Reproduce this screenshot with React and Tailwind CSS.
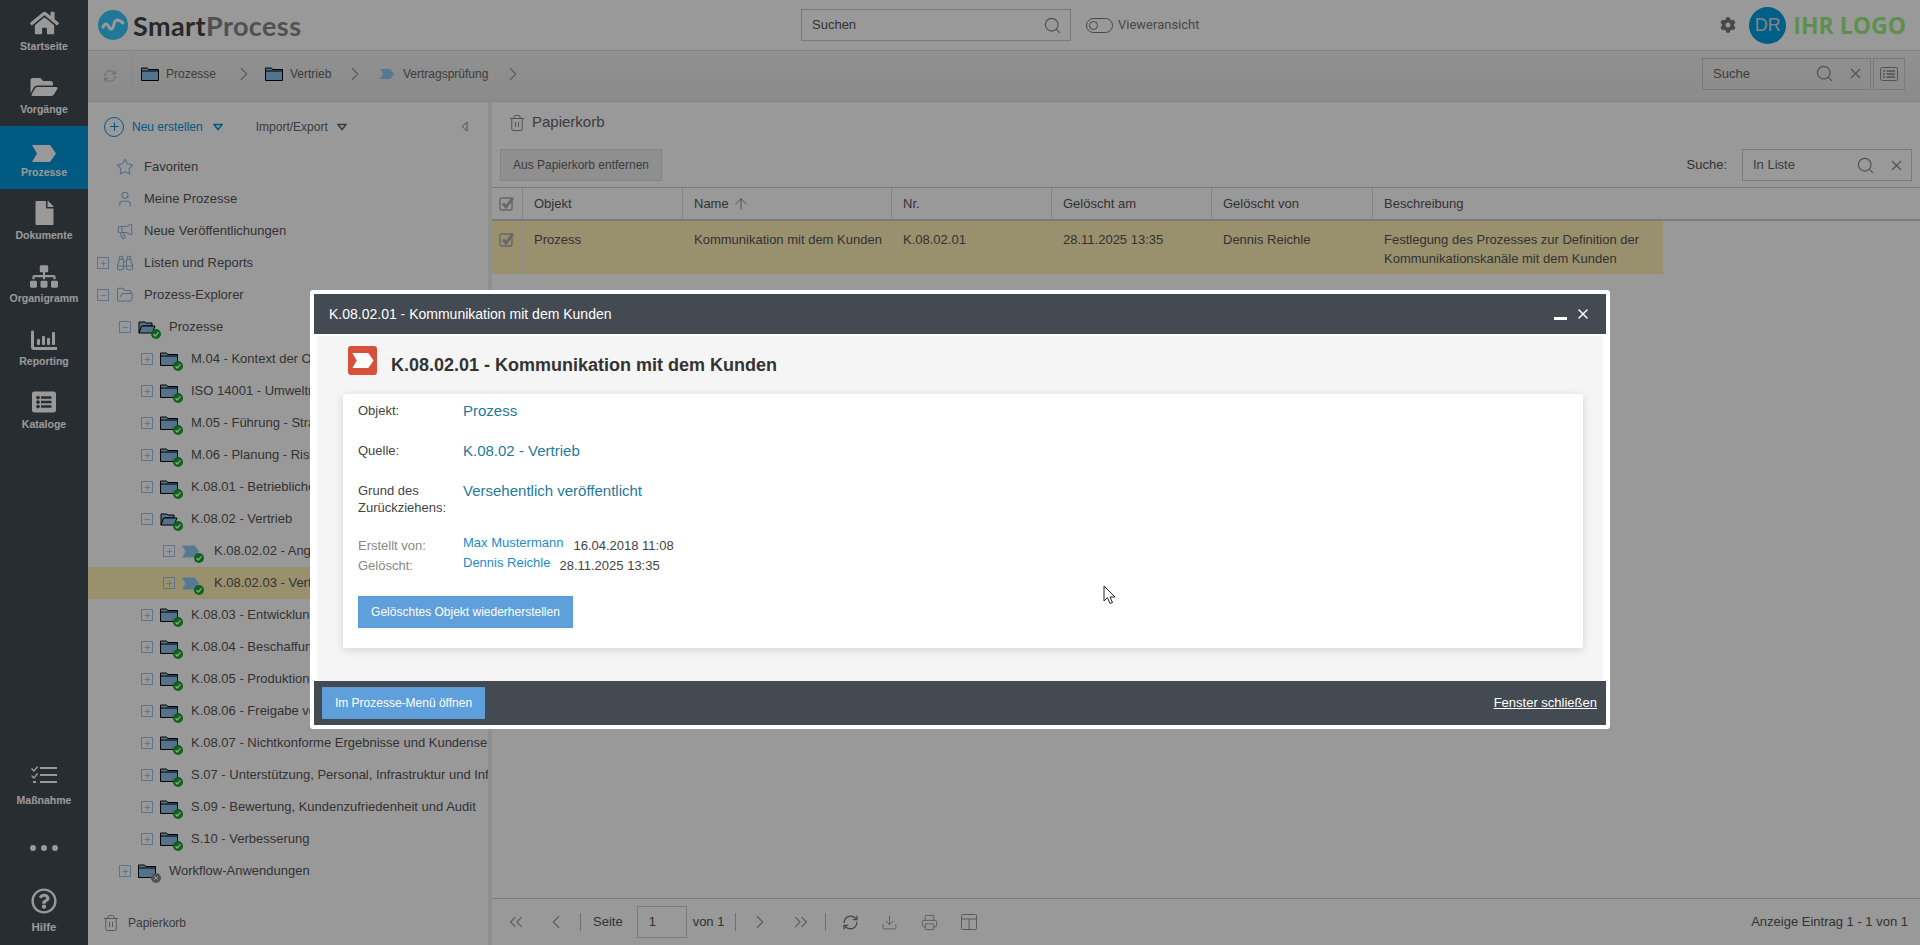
import React from "react";
import {
  Star, User, Megaphone, Binoculars, FolderOpen, Search, X, RefreshCw, ChevronRight, ChevronLeft,
  ChevronsLeft, ChevronsRight, Plus, Minus, Trash2, ArrowUp, Download, Printer,
} from "lucide-react";
import { FaHome, FaFolderOpen, FaFile, FaSitemap, FaListAlt, FaCog, FaRegQuestionCircle } from "react-icons/fa";

const Chevron = ({ className }) => (
  <svg viewBox="0 0 24 17" className={className} fill="currentColor">
    <path d="M0 0h18l6 8.5-6 8.5H0l5-8.5z" />
  </svg>
);

const Folder = ({ open }) => (
  <svg viewBox="0 0 18 14" className="h-[14px] w-[18px]">
    <path d={open ? "M1 13V2h6l1 1h6v3H4z" : "M.5 13.5V1h6l1 1.5h10v11z"} fill="#8bc0ec" stroke="#000" strokeWidth="1" />
    <path d={open ? "M1 13 3.500 6H17l-3 7z" : "M.5 4h17"} fill="#8bc0ec" stroke="#000" strokeWidth="1" />
  </svg>
);

const Badge = ({ off }) => (
  <span className={`absolute -right-[5px] -bottom-[5px] flex h-[10px] w-[10px] items-center justify-center rounded-full ${off ? "bg-[#888]" : "bg-[#10a82a]"}`}>
    {off ? (
      <X className="h-[6px] w-[6px] text-white" strokeWidth={4} />
    ) : (
      <svg viewBox="0 0 10 10" className="h-[10px] w-[10px]"><path d="M2.500 5.200 4.300 7l3.200-3.600" fill="none" stroke="#fff" strokeWidth="1.400" /></svg>
    )}
  </span>
);

const Toggle = ({ open }) => (
  <span className="flex h-[12px] w-[12px] shrink-0 items-center justify-center border border-[#9fc3e8] text-[#7ba6d4]">
    {open ? <Minus className="h-[9px] w-[9px]" strokeWidth={1.500} /> : <Plus className="h-[9px] w-[9px]" strokeWidth={1.500} />}
  </span>
);

const navTop = [
  { label: "Startseite", icon: <FaHome className="h-[26px] w-[29px]" /> },
  { label: "Vorgänge", icon: <FaFolderOpen className="h-[24px] w-[28px]" /> },
  { label: "Prozesse", icon: <Chevron className="h-[17px] w-[24px]" />, active: true },
  { label: "Dokumente", icon: <FaFile className="h-[24px] w-[19px]" /> },
  { label: "Organigramm", icon: <FaSitemap className="h-[23px] w-[28px]" /> },
  {
    label: "Reporting",
    icon: (
      <svg viewBox="0 0 26 22" className="h-[22px] w-[26px]" fill="currentColor">
        <path d="M0 3c0-2 3-2 3 0v15h23v3H3c-2 0-3-1-3-3z" />
        <rect x="6" y="10" width="3" height="6" rx="1" />
        <rect x="11" y="7" width="3" height="9" rx="1" />
        <rect x="16" y="9" width="3" height="7" rx="1" />
        <rect x="21" y="3" width="3" height="13" rx="1" />
      </svg>
    ),
  },
  { label: "Kataloge", icon: <FaListAlt className="h-[24px] w-[28px]" /> },
];

const tree = [
  { label: "Favoriten", icon: Star },
  { label: "Meine Prozesse", icon: User },
  { label: "Neue Veröffentlichungen", icon: Megaphone },
  { label: "Listen und Reports", icon: Binoculars, toggle: "plus", level: 1 },
  { label: "Prozess-Explorer", icon: FolderOpen, toggle: "minus", level: 1 },
  { label: "Prozesse", kind: "folder", open: true, level: 2 },
  { label: "M.04 - Kontext der Organisation", kind: "folder", level: 3 },
  { label: "ISO 14001 - Umweltmanagement", kind: "folder", level: 3 },
  { label: "M.05 - Führung - Strategie", kind: "folder", level: 3 },
  { label: "M.06 - Planung - Risiken", kind: "folder", level: 3 },
  { label: "K.08.01 - Betriebliche Planung", kind: "folder", level: 3 },
  { label: "K.08.02 - Vertrieb", kind: "folder", open: true, level: 3 },
  { label: "K.08.02.02 - Angebotserstellung", kind: "process", level: 4 },
  { label: "K.08.02.03 - Vertragsprüfung", kind: "process", level: 4, selected: true },
  { label: "K.08.03 - Entwicklung", kind: "folder", level: 3 },
  { label: "K.08.04 - Beschaffung", kind: "folder", level: 3 },
  { label: "K.08.05 - Produktion", kind: "folder", level: 3 },
  { label: "K.08.06 - Freigabe von Produkten", kind: "folder", level: 3 },
  { label: "K.08.07 - Nichtkonforme Ergebnisse und Kundenservice", kind: "folder", level: 3 },
  { label: "S.07 - Unterstützung, Personal, Infrastruktur und Information", kind: "folder", level: 3 },
  { label: "S.09 - Bewertung, Kundenzufriedenheit und Audit", kind: "folder", level: 3 },
  { label: "S.10 - Verbesserung", kind: "folder", level: 3 },
  { label: "Workflow-Anwendungen", kind: "folder", level: 2, off: true },
];

const TreeRow = ({ row }) => {
  const Icon = row.icon;
  const pad = { 0: "pl-[28px]", 1: "pl-[9px]", 2: "pl-[31px]", 3: "pl-[53px]", 4: "pl-[75px]" }[row.level || 0];
  const hasToggle = row.toggle || row.kind;
  return (
    <div className={`flex h-8 items-center overflow-hidden whitespace-nowrap ${pad} ${row.selected ? "bg-[#fff0b7]" : ""}`}>
      {hasToggle && <span className="mr-[7px]"><Toggle open={row.toggle === "minus" || row.open} /></span>}
      {Icon && <Icon className="mr-[10px] h-[18px] w-[18px] shrink-0 text-[#8fb4dc]" strokeWidth={1.400} />}
      {row.kind === "folder" && (
        <span className="relative mr-[13px] flex shrink-0"><Folder open={row.open} /><Badge off={row.off} /></span>
      )}
      {row.kind === "process" && (
        <span className="relative mr-[15px] flex shrink-0 text-[#8fcbf5]"><Chevron className="h-[13px] w-[17px]" /><Badge /></span>
      )}
      <span className="text-[13px] text-[#555]">{row.label}</span>
    </div>
  );
};

const Caret = ({ className }) => (
  <svg viewBox="0 0 10 8" className={`h-[8px] w-[10px] ${className}`} fill="none" stroke="currentColor" strokeWidth="1.500">
    <path d="M1 1.500h8L5 6.500z" />
  </svg>
);

const CheckBox = () => (
  <svg viewBox="0 0 16 16" className="h-4 w-4 text-[#aaa]" fill="none">
    <rect x="1" y="2" width="12" height="12" rx="1.500" stroke="currentColor" strokeWidth="1.400" />
    <path d="M4 7.500 7 11l7-9" stroke="currentColor" strokeWidth="2.800" />
  </svg>
);

const Crumb = ({ process, label, width }) => (
  <div className={`flex items-center ${width}`}>
    {process ? (
      <Chevron className="mr-[9px] h-[12px] w-[14px] text-[#8fcbf5]" />
    ) : (
      <span className="mr-[7px] flex"><Folder /></span>
    )}
    <span className="text-xs text-[#666]">{label}</span>
  </div>
);

const SearchBox = ({ label, width, clear }) => (
  <div className={`flex h-8 items-center border border-[#ccc] pl-[10px] pr-[6px] ${width}`}>
    <span className="flex-1 text-[13px] text-[#666]">{label}</span>
    <Search className="h-[19px] w-[19px] text-[#888]" strokeWidth={1.500} />
    {clear && <X className="ml-[13px] h-[17px] w-[17px] text-[#888]" strokeWidth={1.500} />}
  </div>
);

const columns = [
  { label: "Objekt", width: "w-[160px]", value: "Prozess" },
  { label: "Name", width: "w-[209px]", value: "Kommunikation mit dem Kunden", sort: true },
  { label: "Nr.", width: "w-[160px]", value: "K.08.02.01" },
  { label: "Gelöscht am", width: "w-[160px]", value: "28.11.2025 13:35" },
  { label: "Gelöscht von", width: "w-[161px]", value: "Dennis Reichle" },
  {
    label: "Beschreibung",
    width: "w-[290px]",
    value: "Festlegung des Prozesses zur Definition der Kommunikationskanäle mit dem Kunden",
    last: true,
  },
];

const Field = ({ label, value, className }) => (
  <div className={`flex ${className}`}>
    <div className="w-[105px] text-[13px] leading-[17px] text-[#444]">{label}</div>
    <div className="text-[15px] leading-[18px] text-[#1f7a9c]">{value}</div>
  </div>
);

export default function App() {
  return (
    <div className="relative flex h-[945px] w-[1920px] overflow-hidden bg-white font-['Liberation_Sans',Arial,sans-serif]">
      {/* Sidebar */}
      <aside className="flex w-[88px] shrink-0 flex-col bg-[#434b54] text-white">
        {navTop.map((item) => (
          <div key={item.label} className={`flex h-[63px] flex-col items-center ${item.active ? "bg-[#0096d9]" : ""}`}>
            <div className="flex h-[40px] items-end justify-center pb-[4px]">{item.icon}</div>
            <span className="text-[10.500px] leading-[13px] font-bold">{item.label}</span>
          </div>
        ))}
        <div className="mt-auto flex flex-col items-center pb-[11px]">
          <svg viewBox="0 0 26 20" className="h-[20px] w-[26px]" fill="currentColor">
            <path d="M1 3l2 2 3-4 1.200 1L3 7 0 4zM1 10l2 2 3-4 1.200 1L3 14l-3-3z" />
            <rect x="9" y="2" width="17" height="2" /><rect x="9" y="9" width="17" height="2" /><rect x="9" y="16" width="17" height="2" /><rect x="2" y="16" width="3" height="2" />
          </svg>
          <span className="mt-[9px] text-[10.500px] leading-[13px] font-bold">Maßnahme</span>
          <div className="mt-[38px] flex gap-[5px]">
            <span className="h-[6px] w-[6px] rounded-full bg-white" />
            <span className="h-[6px] w-[6px] rounded-full bg-white" />
            <span className="h-[6px] w-[6px] rounded-full bg-white" />
          </div>
          <FaRegQuestionCircle className="mt-[37px] h-[26px] w-[26px]" />
          <span className="mt-[7px] text-[11.500px] leading-[13px] font-bold">Hilfe</span>
        </div>
      </aside>

      <div className="flex min-w-0 flex-1 flex-col">
        {/* Top bar */}
        <header className="flex h-[51px] shrink-0 items-center border-b border-[#ddd] pr-[14px] pl-[10px]">
          <svg viewBox="0 0 30 30" className="h-[30px] w-[30px]">
            <circle cx="15" cy="15" r="15" fill="#37c8fa" />
            <path d="M5 17c2-4 4-4 6 0s4 2 5-3 4-5 9-1" fill="none" stroke="#fff" strokeWidth="3" strokeLinecap="round" />
          </svg>
          <span className="ml-[5px] w-[668px] font-['Lato',sans-serif] text-[27px] leading-none font-bold tracking-[0.4px]">
            <span className="text-[#444]">Smart</span><span className="text-[#888]">Process</span>
          </span>
          <div className="flex h-8 w-[270px] items-center border border-[#ccc] pr-[8px] pl-[10px]">
            <span className="flex-1 text-[13px] text-[#555]">Suchen</span>
            <Search className="h-[19px] w-[19px] text-[#888]" strokeWidth={1.500} />
          </div>
          <span className="ml-[15px] flex h-[15px] w-[27px] items-center rounded-full border-[1.500px] border-[#777] pl-[2px]">
            <span className="h-[9px] w-[9px] rounded-full border-[1.500px] border-[#777]" />
          </span>
          <span className="ml-[5px] font-['Roboto',sans-serif] text-[13px] text-[#777]">Vieweransicht</span>
          <FaCog className="ml-auto h-[16px] w-[16px] text-[#777]" />
          <span className="ml-[13px] flex h-[37px] w-[37px] items-center justify-center rounded-full bg-[#009fe0] text-[18px] text-[#ddd]">DR</span>
          <span className="ml-[7px] font-['Open_Sans',sans-serif] text-[23px] leading-none font-bold text-[#9cf082]">IHR LOGO</span>
        </header>

        {/* Breadcrumb bar */}
        <div className="flex h-[51px] shrink-0 items-center border-b border-[#ddd] bg-gradient-to-b from-[#f0f0f0] to-[#e8e8e8] pr-[15px] pb-[5px]">
          <RefreshCw className="mt-[5px] ml-[15px] h-[14px] w-[14px] text-[#aaa]" strokeWidth={1.500} />
          <div className="mr-[9px] ml-[14px] h-[40px] w-px bg-[#e4e4e4]" />
          <Crumb label="Prozesse" width="w-[95px]" />
          <ChevronRight className="mr-[10px] -ml-[3px] h-[22px] w-[22px] text-[#999]" strokeWidth={1.200} />
          <Crumb label="Vertrieb" width="w-[82px]" />
          <ChevronRight className="mr-[14px] -ml-[3px] h-[22px] w-[22px] text-[#999]" strokeWidth={1.200} />
          <Crumb process label="Vertragsprüfung" width="w-[125px]" />
          <ChevronRight className="-ml-[3px] h-[22px] w-[22px] text-[#999]" strokeWidth={1.200} />
          <div className="ml-auto flex items-center gap-[2px]">
            <SearchBox label="Suche" width="w-[169px]" clear />
            <div className="flex h-8 w-[32px] items-center justify-center border border-[#ccc]">
              <svg viewBox="0 0 18 14" className="h-[14px] w-[18px] text-[#888]" fill="none" stroke="currentColor">
                <rect x=".5" y=".5" width="17" height="13" rx="2" />
                <path d="M3 4h2M3 7h2M3 10h2M6.500 4H15M6.500 7H15M6.500 10H15" strokeWidth="1.400" />
              </svg>
            </div>
          </div>
        </div>

        <div className="flex min-h-0 flex-1">
          {/* Left tree panel */}
          <section className="flex w-[404px] shrink-0 border-r-[4px] border-[#eee]">
            <div className="flex w-[400px] flex-col">
              <div className="flex h-[49px] shrink-0 items-center pl-[16px]">
                <span className="flex h-5 w-5 items-center justify-center rounded-full border-[1.500px] border-[#0096d9]">
                  <Plus className="h-[13px] w-[13px] text-[#0096d9]" strokeWidth={2} />
                </span>
                <span className="ml-[8px] text-xs text-[#0096d9]">Neu erstellen</span>
                <Caret className="ml-[10px] text-[#0096d9]" />
                <span className="ml-[33px] text-xs text-[#666]">Import/Export</span>
                <Caret className="ml-[9px] text-[#666]" />
                <svg viewBox="0 0 7 11" className="ml-[114px] h-[11px] w-[7px] text-[#888]" fill="none" stroke="currentColor"><path d="M6 1v9L1 5.500z" /></svg>
              </div>
              <div className="flex-1">
                {tree.map((row) => <TreeRow key={row.label} row={row} />)}
              </div>
              <div className="flex h-[44px] shrink-0 items-center pl-[14px]">
                <Trash2 className="h-[18px] w-[18px] text-[#888]" strokeWidth={1.200} />
                <span className="ml-[8px] text-xs text-[#666]">Papierkorb</span>
              </div>
            </div>
          </section>

          {/* Right content */}
          <main className="flex min-w-0 flex-1 flex-col">
            <div className="flex h-[47px] shrink-0 items-center pb-[6px] pl-[16px]">
              <Trash2 className="h-[18px] w-[18px] text-[#888]" strokeWidth={1.300} />
              <span className="ml-[6px] text-[15px] text-[#666]">Papierkorb</span>
            </div>
            <div className="flex h-8 shrink-0 items-center pr-2 pl-2">
              <button className="h-8 w-[162px] border border-[#ddd] bg-[#efefef] text-xs text-[#666]">Aus Papierkorb entfernen</button>
              <span className="mr-[15px] ml-auto text-[13px] text-[#555]">Suche:</span>
              <SearchBox label="In Liste" width="w-[170px]" clear />
            </div>
            <div className="mt-[6px] flex h-[34px] shrink-0 border-t border-b-2 border-[#ccc] text-[13px] text-[#555]">
              <div className="flex w-[31px] items-center justify-center border-r border-[#ddd]"><CheckBox /></div>
              {columns.map((col) => (
                <div key={col.label} className={`flex items-center pl-[11px] ${col.last ? "" : "border-r border-[#ddd]"} ${col.width}`}>
                  {col.label}
                  {col.sort && <ArrowUp className="ml-[3px] h-[18px] w-[18px] text-[#666]" strokeWidth={1} />}
                </div>
              ))}
            </div>
            <div className="flex h-[53px] w-[1171px] shrink-0 bg-[#fff0b7] text-[13px] text-[#555]">
              <div className="flex w-[31px] justify-center border-r border-[#eee] pt-[11px]"><CheckBox /></div>
              {columns.map((col) => (
                <div key={col.label} className={`pt-[9px] pl-[11px] leading-[19px] ${col.width}`}>{col.value}</div>
              ))}
            </div>
            <div className="flex-1" />
            {/* Pager */}
            <footer className="flex h-[47px] shrink-0 items-center border-t border-[#ccc] pr-[12px] text-[13px] text-[#555]">
              <ChevronsLeft className="ml-[13px] h-[22px] w-[22px] text-[#999]" strokeWidth={1.200} />
              <ChevronLeft className="ml-[18px] h-[22px] w-[22px] text-[#999]" strokeWidth={1.200} />
              <span className="ml-[13px] h-[18px] w-px bg-[#bbb]" />
              <span className="ml-[12px]">Seite</span>
              <span className="ml-[14px] flex h-8 w-[50px] items-center border border-[#ccc] pl-[11px]">1</span>
              <span className="ml-[6px]">von 1</span>
              <span className="ml-[11px] h-[18px] w-px bg-[#bbb]" />
              <ChevronRight className="ml-[13px] h-[22px] w-[22px] text-[#999]" strokeWidth={1.200} />
              <ChevronsRight className="ml-[19px] h-[22px] w-[22px] text-[#999]" strokeWidth={1.200} />
              <span className="ml-[13px] h-[18px] w-px bg-[#bbb]" />
              <RefreshCw className="ml-[16px] h-[17px] w-[17px] text-[#777]" strokeWidth={1.800} />
              <Download className="ml-[22px] h-[17px] w-[17px] text-[#999]" strokeWidth={1.300} />
              <Printer className="ml-[23px] h-[17px] w-[17px] text-[#999]" strokeWidth={1.300} />
              <svg viewBox="0 0 16 16" className="ml-[23px] h-[16px] w-[16px] text-[#999]" fill="none" stroke="currentColor"><rect x=".5" y=".5" width="15" height="15" rx="1" /><path d="M.5 5h15M8 5v10.500" /></svg>
              <span className="ml-auto">Anzeige Eintrag 1 - 1 von 1</span>
            </footer>
          </main>
        </div>
      </div>

      {/* Dimmed backdrop and dialog */}
      <div className="absolute inset-0 flex items-start justify-center bg-black/40 pt-[290px]">
        <div className="flex h-[439px] w-[1300px] flex-col rounded-[3px] border-[4px] border-white bg-white">
          <div className="flex h-[40px] shrink-0 items-center bg-[#434a52] pr-[15px] pl-[15px] text-sm text-white">
            <span className="flex-1">K.08.02.01 - Kommunikation mit dem Kunden</span>
            <span className="mt-[9px] mr-[8px] h-[3px] w-[13px] bg-white" />
            <X className="h-[16px] w-[16px]" strokeWidth={2.200} />
          </div>
          <div className="mx-[3px] mt-[2px] flex min-h-0 flex-1 flex-col bg-[#f5f5f5] pr-[20px] pl-[26px]">
            <div className="flex h-[58px] shrink-0 items-start pt-[10px] pl-[5px]">
              <span className="flex h-[29px] w-[29px] items-center justify-center rounded-[3px] bg-[#d6503a] text-white">
                <Chevron className="h-[15px] w-[22px]" />
              </span>
              <span className="mt-[10px] ml-[14px] text-lg leading-[18px] font-bold text-[#333]">K.08.02.01 - Kommunikation mit dem Kunden</span>
            </div>
            <div className="flex h-[254px] shrink-0 flex-col rounded-[1px] bg-white pt-[8px] pl-[15px] shadow-[0_2px_10px_rgba(0,0,0,0.14)]">
              <Field label="Objekt:" value="Prozess" className="h-[40px]" />
              <Field label="Quelle:" value="K.08.02 - Vertrieb" className="h-[40px]" />
              <Field label={<>Grund des<br />Zurückziehens:</>} value="Versehentlich veröffentlicht" className="h-[54px]" />
              <div className="flex h-[20px] items-center text-[13px]">
                <span className="w-[105px] text-[#888]">Erstellt von:</span>
                <span className="-mt-[6px] text-[#1a8ccb]">Max Mustermann</span>
                <span className="ml-[10px] text-[#444]">16.04.2018 11:08</span>
              </div>
              <div className="flex h-[20px] items-center text-[13px]">
                <span className="w-[105px] text-[#888]">Gelöscht:</span>
                <span className="-mt-[6px] text-[#1a8ccb]">Dennis Reichle</span>
                <span className="ml-[9px] text-[#444]">28.11.2025 13:35</span>
              </div>
              <button className="mt-[20px] h-[32px] w-[215px] border border-[#5a9bd8] bg-[#5fa0dc] text-xs text-white">Gelöschtes Objekt wiederherstellen</button>
            </div>
            <div className="flex-1" />
          </div>
          <div className="flex h-[44px] shrink-0 items-center justify-between bg-[#434a52] pr-[9px] pl-[8px]">
            <button className="h-[32px] w-[163px] border border-[#5a9bd8] bg-[#5fa0dc] text-xs text-white">Im Prozesse-Menü öffnen</button>
            <span className="text-[13px] text-white underline">Fenster schließen</span>
          </div>
        </div>
      </div>

      {/* Mouse pointer in the capture */}
      <svg viewBox="0 0 13 20" className="absolute top-[585px] left-[1103px] h-[20px] w-[13px]">
        <path d="M1 1v15l3.500-3.300L7 18.500l2.500-1L7 12h5z" fill="#fff" stroke="#222" strokeWidth="1" />
      </svg>
    </div>
  );
}
